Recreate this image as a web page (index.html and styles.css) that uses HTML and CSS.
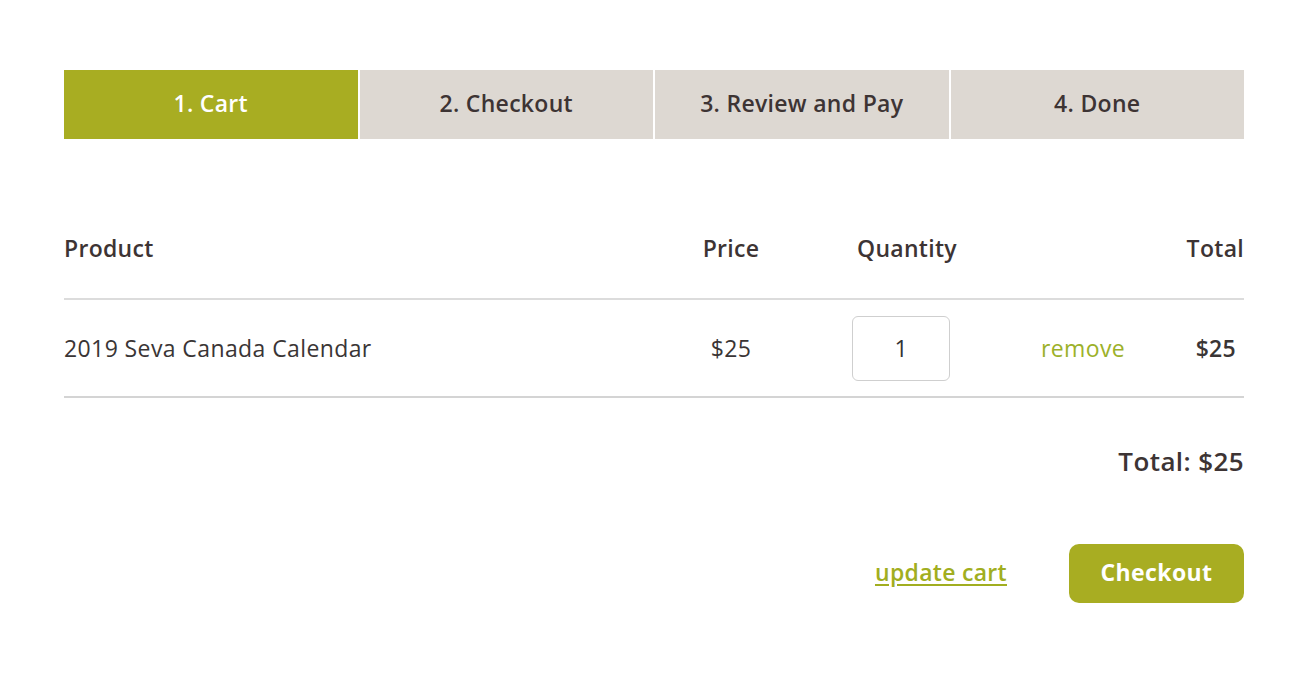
FILE: index.html
```html
<!DOCTYPE html>
<html>
<head>
<meta charset="utf-8">
<link rel="stylesheet" href="styles.css">
</head>
<body>
<div class="page">
  <nav class="steps">
    <div class="step active">1. Cart</div>
    <div class="step">2. Checkout</div>
    <div class="step">3. Review and Pay</div>
    <div class="step">4. Done</div>
  </nav>

  <div class="cart">
    <div class="row head">
      <div class="c-product">Product</div>
      <div class="c-price">Price</div>
      <div class="c-qty">Quantity</div>
      <div class="c-remove"></div>
      <div class="c-total">Total</div>
    </div>
    <div class="row item">
      <div class="c-product">2019 Seva Canada Calendar</div>
      <div class="c-price">$25</div>
      <div class="c-qty"><div class="qty-box">1</div></div>
      <div class="c-remove"><a class="remove">remove</a></div>
      <div class="c-total strong">$25</div>
    </div>
  </div>

  <div class="grand">Total: $25</div>

  <div class="actions">
    <a class="update">update cart</a>
    <button class="checkout">Checkout</button>
  </div>
</div>
</body>
</html>
```

FILE: styles.css
```css
html, body {
  margin: 0;
  padding: 0;
  background: #ffffff;
}
body {
  font-family: "Open Sans", Lato, sans-serif;
  color: #3d3434;
}
.page {
  width: 1180px;
  margin: 0 0 0 64px;
  padding-top: 70px;
}
.steps {
  display: grid;
  grid-template-columns: repeat(4, 1fr);
  column-gap: 2px;
  height: 69px;
}
.step {
  background: #ddd8d2;
  display: flex;
  align-items: center;
  justify-content: center;
  padding-bottom: 4px;
  box-sizing: border-box;
  font-size: 23px;
  font-weight: 600;
  letter-spacing: 0.3px;
  color: #3d3434;
}
.step.active {
  background: #a8ad22;
  color: #ffffff;
}
.cart {
  margin-top: 79px;
}
.row {
  display: grid;
  grid-template-columns: 607px 120px 220px 144px 89px;
  align-items: center;
}
.row.head {
  border-bottom: 2px solid #dcdcdc;
  font-size: 23px;
  font-weight: 600;
  letter-spacing: 0.3px;
  box-sizing: border-box;
  height: 82px;
  padding-bottom: 20px;
}
.row.item {
  height: 98px;
  border-bottom: 2px solid #d4d4d4;
  font-size: 23px;
  font-weight: 400;
  letter-spacing: 0.4px;
  color: #3a3535;
  box-sizing: border-box;
}
.c-price, .c-qty, .c-remove {
  text-align: center;
}
.head .c-qty {
  padding-left: 12px;
}
.c-total {
  text-align: right;
}
.item .c-total {
  padding-right: 8px;
  font-weight: 600;
  letter-spacing: 0.3px;
}
.qty-box {
  width: 98px;
  height: 65px;
  box-sizing: border-box;
  border: 1px solid #cfcfcf;
  border-radius: 6px;
  margin: 0 auto;
  display: flex;
  align-items: center;
  justify-content: center;
  font-size: 23px;
  font-weight: 400;
  letter-spacing: 0;
  color: #333;
}
.remove {
  color: #9cb12a;
  font-size: 23px;
  font-weight: 400;
  letter-spacing: 0.4px;
}
.grand {
  text-align: right;
  font-size: 26px;
  font-weight: 600;
  letter-spacing: 0.4px;
  margin-top: 45px;
}
.actions {
  display: flex;
  justify-content: flex-end;
  align-items: center;
  gap: 62px;
  margin-top: 65px;
}
.update {
  color: #a1ae20;
  font-size: 23px;
  font-weight: 600;
  letter-spacing: 0.3px;
  text-decoration: underline;
  text-underline-offset: 3px;
  padding-bottom: 3px;
}
.checkout {
  width: 175px;
  height: 59px;
  background: #a8ad22;
  color: #ffffff;
  border: none;
  border-radius: 10px;
  font-family: "Open Sans", Lato, sans-serif;
  font-size: 23px;
  font-weight: 700;
  letter-spacing: 0.4px;
  padding-bottom: 5px;
}
```
